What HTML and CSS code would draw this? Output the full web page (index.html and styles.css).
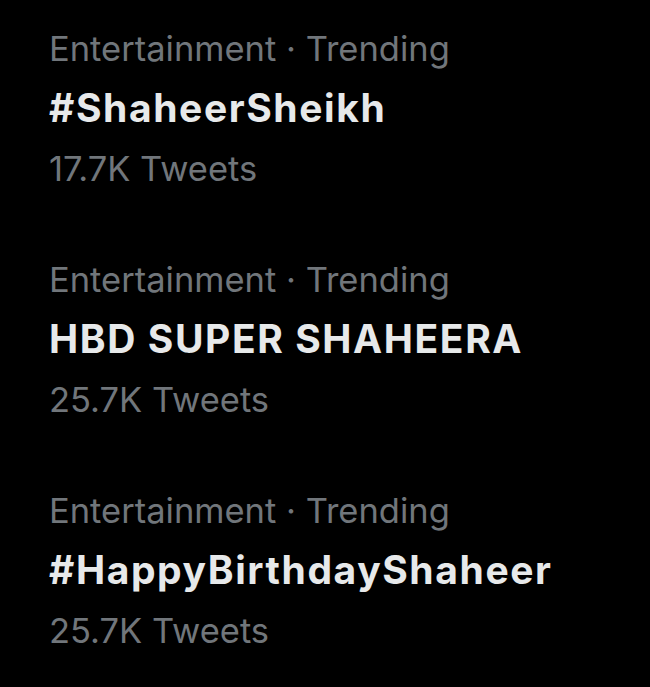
FILE: index.html
```html
<!DOCTYPE html>
<html>
  <head>
    <meta http-equiv="Content-Type" content="text/html;charset=utf-8" />
    <title>Trends</title>
    <link rel="stylesheet" href="styles.css">
  </head>
  <body>
    <ul class="trendList">
      <li class="trend">
        <div class="trendMeta">Entertainment · Trending</div>
        <div class="trendTitle">#ShaheerSheikh</div>
        <div class="trendCount">17.7K Tweets</div>
      </li>
      <li class="trend">
        <div class="trendMeta">Entertainment · Trending</div>
        <div class="trendTitle">HBD SUPER SHAHEERA</div>
        <div class="trendCount">25.7K Tweets</div>
      </li>
      <li class="trend">
        <div class="trendMeta">Entertainment · Trending</div>
        <div class="trendTitle">#HappyBirthdayShaheer</div>
        <div class="trendCount">25.7K Tweets</div>
      </li>
    </ul>
  </body>
</html>
```

FILE: styles.css
```css
body {
  margin: 0;
  background-color: #000000;
  font-family: Inter, Roboto, "Liberation Sans", sans-serif;
  color: #e7e9ea;
}

ul,
li {
  margin: 0;
  padding: 0;
  list-style: none;
}

.trendList {
  padding-top: 20px;
  padding-left: 49px;
}

.trend {
  padding-bottom: 51px;
}

.trendMeta,
.trendCount {
  font-size: 34.5px;
  color: #71767b;
}

.trendMeta {
  line-height: 58px;
}

.trendTitle {
  font-size: 39px;
  font-weight: bold;
  letter-spacing: 1.6px;
  line-height: 60px;
}

.trendCount {
  line-height: 62px;
}
```
